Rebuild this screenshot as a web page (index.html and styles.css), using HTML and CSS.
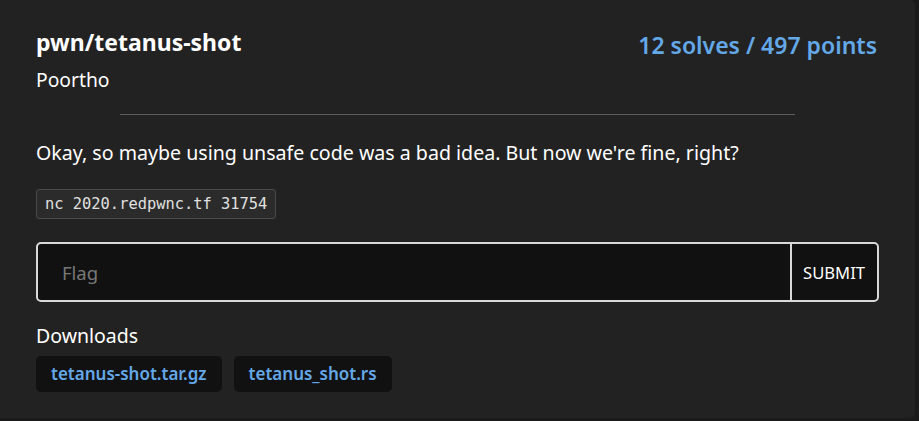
FILE: index.html
```html
<!DOCTYPE html>
<html>
<head>
<meta charset="utf-8">
<link rel="stylesheet" href="styles.css">
</head>
<body>
<div class="card">
  <div class="header">
    <div class="titles">
      <div class="title">pwn/tetanus-shot</div>
      <div class="author">Poortho</div>
    </div>
    <div class="stats">12 solves / 497 points</div>
  </div>
  <div class="rule"></div>
  <p class="desc">Okay, so maybe using unsafe code was a bad idea. But now we're fine, right?</p>
  <div class="code-row"><code class="code">nc 2020.redpwnc.tf 31754</code></div>
  <form class="flag-form">
    <input class="flag-input" type="text" placeholder="Flag">
    <button class="submit" type="button">SUBMIT</button>
  </form>
  <div class="dl-label">Downloads</div>
  <div class="downloads">
    <a class="dl" href="#">tetanus-shot.tar.gz</a>
    <a class="dl" href="#">tetanus_shot.rs</a>
  </div>
</div>
</body>
</html>
```
FILE: styles.css
```css
html, body {
  margin: 0;
  padding: 0;
  background: #1a1a1a;
}
body {
  font-family: "Noto Sans", "Open Sans", sans-serif;
  color: #fff;
}
.card {
  box-sizing: border-box;
  width: 915px;
  height: 418px;
  background: #222222;
  border-radius: 0 5px 5px 0;
  padding: 26px 38px 0 36px;
}
.header {
  display: flex;
  justify-content: space-between;
  align-items: flex-start;
}
.title {
  font-size: 23px;
  font-weight: 700;
  line-height: 32px;
}
.author {
  font-size: 19.3px;
  line-height: 26px;
  margin-top: 9px;
}
.stats {
  font-size: 23px;
  font-weight: 600;
  color: #64a8e8;
  line-height: 32px;
  padding-top: 3px;
}
.rule {
  height: 1px;
  background: #5c5c5c;
  margin: 21px 82px 0 84px;
}
.desc {
  font-size: 19.6px;
  line-height: 28px;
  margin: 24px 0 0 0;
}
.code-row {
  margin-top: 22px;
  display: flex;
}
.code {
  font-family: "DejaVu Sans Mono", monospace;
  font-size: 15.4px;
  color: #e0e0e0;
  background: #2b2b2b;
  border: 1px solid #4a4a4a;
  border-radius: 3px;
  padding: 5px 8px;
  line-height: 18px;
}
.flag-form {
  display: flex;
  margin: 23px -2px 0 0;
  height: 60px;
  box-sizing: border-box;
  border: 2px solid #d9d9d9;
  border-radius: 5px;
  background: #111111;
  overflow: hidden;
}
.flag-input {
  flex: 1;
  background: transparent;
  border: 0;
  outline: none;
  font-family: "Noto Sans", "Open Sans", sans-serif;
  font-size: 18.5px;
  color: #fff;
  padding: 0 0 0 24px;
}
.flag-input::placeholder {
  color: #777;
}
.submit {
  background: transparent;
  border: 0;
  border-left: 2px solid #d9d9d9;
  color: #fff;
  font-family: "Noto Sans", "Open Sans", sans-serif;
  font-size: 16.6px;
  padding: 0 12px 0 11px;
}
.dl-label {
  font-size: 19.5px;
  line-height: 26px;
  margin-top: 21px;
}
.downloads {
  display: flex;
  gap: 12px;
  margin-top: 7px;
}
.dl {
  display: block;
  background: #111111;
  border-radius: 5px;
  padding: 0 15px;
  line-height: 36px;
  color: #64a8e8;
  font-weight: 600;
  font-size: 17px;
  text-decoration: none;
}
```
